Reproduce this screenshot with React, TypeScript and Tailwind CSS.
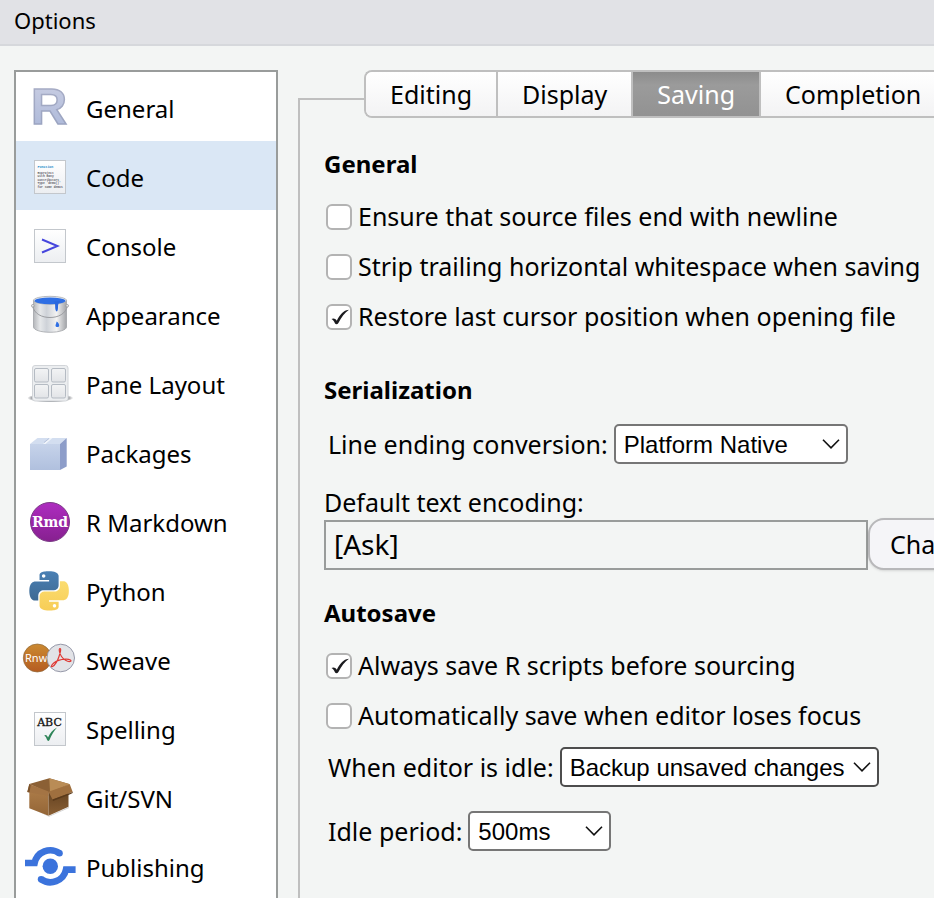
import { useState, type ReactNode } from "react";

const BLUE = "#3b73dc";

function Sheet({ children }: { children: ReactNode }) {
  return (
    <>
      <rect x="12.5" y="19.5" width="31" height="33" fill="url(#sheet)" stroke="#c3c7cc" />
      {children}
    </>
  );
}

function GeneralIcon() {
  return (
    <text x="9" y="52" fontFamily="Liberation Sans" fontWeight="700" fontSize="50" fill="url(#letter)" stroke="url(#letterEdge)" strokeWidth="1.500">
      R
    </text>
  );
}

function CodeIcon() {
  return (
    <Sheet>
      <g fontFamily="Liberation Mono" fontWeight="700" fontSize="3" fill="#5c6068">
        <text x="15.500" y="26.500" fontSize="3.300" fill="#1787c9">Function</text>
        <text x="15.500" y="32.500">Rsproject</text>
        <text x="15.500" y="36">with many</text>
        <text x="15.500" y="39.500">contributors</text>
        <text x="15.500" y="43">Type 'demo()'</text>
        <text x="15.500" y="46.500">for some demos</text>
      </g>
    </Sheet>
  );
}

function ConsoleIcon() {
  return (
    <Sheet>
      <polyline points="20,29.500 35.500,36 20,42.500" fill="none" stroke="#4646dd" strokeWidth="1.900" />
    </Sheet>
  );
}

function AppearanceIcon() {
  return (
    <>
      <path d="M11.500 21V48c0 3 7.500 5.300 16.500 5.300S44.500 51 44.500 48V21z" fill="url(#metal)" stroke="#9a9ca0" strokeWidth=".7" />
      <ellipse cx="28" cy="21.300" rx="16.500" ry="4" fill="#eef0f2" stroke="#a8abb0" strokeWidth=".8" />
      <ellipse cx="28" cy="21.800" rx="15.500" ry="3.400" fill="#2f6fe4" />
      <path d="M31.500 22.500c1.500 1 1.700 2 1.700 6 0 1.200.5 4 1.500 4s1.300-2.500 1.300-4c0-3 .3-5 2.500-6.500z" fill="#2b68de" />
      <path d="M10.500 26.500C12 35 20 38.500 28 38.500S44 35 45.500 26.500" fill="none" stroke="#9c9ea2" strokeWidth="1" />
      <circle cx="10.800" cy="26.800" r="1.300" fill="#f1f1f1" stroke="#909296" strokeWidth=".8" />
      <circle cx="45.200" cy="26.800" r="1.300" fill="#f1f1f1" stroke="#909296" strokeWidth=".8" />
      <path d="M34.500 42.500c1.800 1 2.700 2.500 2.700 4 0 2-3.700 2-3.700 0 0-1.200 1-2 1-4z" fill="#2f6fe4" />
    </>
  );
}

function PaneIcon() {
  return (
    <>
      <ellipse cx="28.300" cy="50" rx="23" ry="4.500" fill="url(#shade)" />
      <rect x="10.500" y="17.500" width="35.500" height="35.500" rx="2.500" fill="#eceef0" stroke="#d2d5d9" />
      {[12.5, 29.5].map((x) =>
        [20.5, 36.5].map((y) => (
          <rect key={`${x} ${y}`} x={x} y={y} width="14" height="13.500" rx="1.500" fill="url(#pane)" stroke="#b5bbc3" />
        )),
      )}
    </>
  );
}

function PackagesIcon() {
  return (
    <>
      <path d="M8 27l7.500-6h29.200L38 27z" fill="#d3def0" />
      <path d="M21 27l7-6h2.500l-7 6z" fill="#f1f5fb" />
      <path d="M22 25.500l5-4" stroke="#a9b6d3" strokeWidth=".7" />
      <path d="M38 27l6.700-6v28.500L38 53z" fill="#8d9dc9" />
      <path d="M8 27h30v26H8z" fill="url(#carton)" />
    </>
  );
}

function MarkdownIcon() {
  return (
    <>
      <circle cx="28" cy="36" r="19.500" fill="url(#purple)" stroke="#7b3b86" strokeWidth="1" />
      <text x="28" y="41" textAnchor="middle" fontFamily="DejaVu Serif" fontWeight="700" fontSize="14" fill="#fff">
        Rmd
      </text>
    </>
  );
}

function PythonIcon() {
  return (
    <g transform="translate(7.400 16.200) scale(1.640)">
      <path
        fill="url(#pyBlue)"
        d="M14.25.18l.9.2.73.26.59.3.45.32.34.34.25.34.16.33.1.3.04.26.02.2-.01.13V8.5l-.05.63-.13.55-.21.46-.26.38-.3.31-.33.25-.35.19-.35.14-.33.1-.3.07-.26.04-.21.02H8.77l-.69.05-.59.14-.5.22-.41.27-.33.32-.27.35-.2.36-.15.37-.1.35-.07.32-.04.27-.02.21v3.06H3.17l-.21-.03-.28-.07-.32-.12-.35-.18-.36-.26-.36-.36-.35-.46-.32-.59-.28-.73-.21-.88-.14-1.05-.05-1.23.06-1.22.16-1.04.24-.87.32-.71.36-.57.4-.44.42-.33.42-.24.4-.16.36-.1.32-.05.24-.01h.16l.06.01h8.16v-.83H6.18l-.01-2.75-.02-.37.05-.34.11-.31.17-.28.25-.26.31-.23.38-.2.44-.18.51-.15.58-.12.64-.1.71-.06.77-.04.84-.02 1.27.05zm-6.3 1.98l-.23.33-.08.41.08.41.23.34.33.22.41.09.41-.09.33-.22.23-.34.08-.41-.08-.41-.23-.33-.33-.22-.41-.09-.41.09z"
      />
      <path
        fill="url(#pyYellow)"
        d="M21.04 6.110l.28.06.32.12.35.18.36.27.36.35.35.47.32.59.28.73.21.88.14 1.04.05 1.23-.06 1.23-.16 1.04-.24.86-.32.71-.36.57-.4.45-.42.33-.42.24-.4.16-.36.09-.32.05-.24.02-.16-.01h-8.22v.82h5.84l.01 2.760.02.36-.05.34-.11.31-.17.29-.25.25-.31.24-.38.2-.44.17-.51.15-.58.13-.64.09-.71.07-.77.04-.84.01-1.27-.04-1.07-.14-.9-.2-.73-.25-.59-.3-.45-.33-.34-.34-.25-.34-.16-.33-.1-.3-.04-.25-.02-.2.01-.13v-5.340l.05-.64.13-.54.21-.46.26-.38.3-.32.33-.24.35-.2.35-.14.33-.1.3-.06.26-.04.21-.02.13-.01h5.840l.69-.05.59-.14.5-.21.41-.28.33-.32.27-.35.2-.36.15-.36.1-.35.07-.32.04-.28.02-.21V6.070h2.090l.14.01zm-6.470 14.250l-.23.33-.08.41.08.41.23.33.33.23.41.08.41-.08.33-.23.23-.33.08-.41-.08-.41-.23-.33-.33-.23-.41-.08-.41.08z"
      />
    </g>
  );
}

function SweaveIcon() {
  return (
    <>
      <circle cx="15.300" cy="34" r="14" fill="url(#orange)" stroke="#8f6a3c" strokeWidth=".7" />
      <text x="3" y="38" fontFamily="Noto Sans" fontSize="11" fill="#fff">Rnw</text>
      <circle cx="38.700" cy="34" r="13.800" fill="#e2e3e7" stroke="#8b8fa0" strokeWidth=".9" />
      <path
        d="M38 24.500c-1.500 0-.5 5 1.500 8s6 5.500 8.500 5 0-2.500-4.500-2.300-9.500 1.800-12 4-2.800 4.300-1 3.300 5-5.500 6.500-10 2.300-8 1-8z"
        fill="none"
        stroke="#df3a35"
        strokeWidth="1.200"
      />
    </>
  );
}

function SpellingIcon() {
  return (
    <Sheet>
      <text x="27.500" y="33" textAnchor="middle" fontFamily="DejaVu Serif" fontSize="11" fill="#111" stroke="#111" strokeWidth=".3">
        ABC
      </text>
      <path d="M22.200 42.800c1.500-1.800 2.800-.8 3.800 1.700 2-4.500 4.500-7.500 9-10-3.500 4-5.500 7.500-7.500 12.500-1 1.500-2 1-2.500-.2-.7-2.200-1.500-3.800-2.800-4z" fill="#2e8458" />
    </Sheet>
  );
}

function GitIcon() {
  return (
    <>
      <path d="M9 46l18 8 20-9v1l-20 8.800z" fill="#00000030" />
      <path d="M7.300 22l20-5.700 20.700 6L27 31z" fill="#8b6035" />
      <path d="M27.300 16.300l20.700 6L28 30z" fill="#b98c56" />
      <path d="M7.300 24L26.500 30.500V53.700L7.300 46.300z" fill="url(#boxLeft)" />
      <path d="M26.500 30.500L46.500 26v18.700L26.500 53.700z" fill="url(#boxRight)" />
      <path d="M7.300 22L26.500 29.500 26.500 34 5.300 30z" fill="#a47444" />
      <path d="M5.300 30l2-8 1.500.8-1.300 7.600z" fill="#7c532c" />
      <path d="M26.500 29.700L47.800 22.300 50.700 30 30.500 37.500z" fill="#a0703f" />
      <path d="M30.500 37.500L50.700 30v1l-4.200 2-15.500 6z" fill="#5a3a1b" />
    </>
  );
}

function PublishingIcon() {
  return (
    <>
      <circle cx="28.300" cy="35.300" r="7.700" fill={BLUE} />
      {["", "rotate(180 28.300 35.300)"].map((turn) => (
        <g key={turn} transform={turn}>
          <path d="M3 32h9.600A16 16 0 0 1 37.500 22.300" fill="none" stroke={BLUE} strokeWidth="6.600" />
          <circle cx="37.500" cy="22.300" r="3.300" fill={BLUE} />
        </g>
      ))}
    </>
  );
}

const gradients: [string, string, string][] = [
  ["sheet", "#ffffff", "#eceef1"],
  ["letter", "#cbcfe3", "#a9b6d8"],
  ["letterEdge", "#a9aec6", "#98a2c0"],
  ["pane", "#f3f4f5", "#e2e4e7"],
  ["carton", "#c6d3ea", "#b0c0de"],
  ["purple", "#ae2cc0", "#86208f"],
  ["orange", "#cb8a31", "#b55c20"],
  ["pyBlue", "#4a80b4", "#3f6a93"],
  ["pyYellow", "#fbdc70", "#f7cd56"],
  ["boxLeft", "#b07f4b", "#936536"],
  ["boxRight", "#5f3f1f", "#8a5f34"],
];

function Gradients() {
  return (
    <svg className="absolute size-0" aria-hidden="true">
      <defs>
        {gradients.map(([id, from, to]) => (
          <linearGradient key={id} id={id} x1="0" y1="0" x2="0" y2="1">
            <stop offset="0" stopColor={from} />
            <stop offset="1" stopColor={to} />
          </linearGradient>
        ))}
        <linearGradient id="metal">
          <stop offset="0" stopColor="#b4b6ba" />
          <stop offset=".2" stopColor="#e6e8ea" />
          <stop offset=".4" stopColor="#ced2d8" />
          <stop offset=".7" stopColor="#f3f3f3" />
          <stop offset="1" stopColor="#a2a4a8" />
        </linearGradient>
        <radialGradient id="shade">
          <stop offset=".75" stopColor="#85888d" />
          <stop offset="1" stopColor="#85888d00" />
        </radialGradient>
      </defs>
    </svg>
  );
}

const sections: [string, () => ReactNode][] = [
  ["General", GeneralIcon],
  ["Code", CodeIcon],
  ["Console", ConsoleIcon],
  ["Appearance", AppearanceIcon],
  ["Pane Layout", PaneIcon],
  ["Packages", PackagesIcon],
  ["R Markdown", MarkdownIcon],
  ["Python", PythonIcon],
  ["Sweave", SweaveIcon],
  ["Spelling", SpellingIcon],
  ["Git/SVN", GitIcon],
  ["Publishing", PublishingIcon],
];

function CheckRow({ id, label, defaultChecked = false }: { id: string; label: string; defaultChecked?: boolean }) {
  const [checked, setChecked] = useState(defaultChecked);
  return (
    <div className="flex h-[50px] items-center gap-1.5 pl-0.5">
      <span className="relative flex">
        <input
          id={id}
          type="checkbox"
          checked={checked}
          onChange={(e) => setChecked(e.target.checked)}
          className="size-[26px] appearance-none rounded-md border-2 border-[#b3b3b3] bg-white"
        />
        {checked && (
          <svg viewBox="0 0 26 26" className="pointer-events-none absolute inset-0 size-[26px]" aria-hidden="true">
            <path d="M5.500 15c2-1.200 4-.3 5.300 1.700C13.500 11.500 16.500 7.500 20.500 6.200l2.500-.4C18.800 8.500 15.300 13.500 12.400 19c-.9 1.600-2.800 1.600-3.500.2-.9-1.900-1.700-3.400-3.400-4.200z" fill="#1b1b1f" />
          </svg>
        )}
      </span>
      <label htmlFor={id} className="pb-0.5">
        {label}
      </label>
    </div>
  );
}

function SelectRow({ id, label, options, box }: { id: string; label: string; options: string[]; box: string }) {
  return (
    <div className="flex h-10 items-center pl-1">
      <label htmlFor={id}>{label}</label>
      <span className="relative ml-1.5 flex">
        <select
          id={id}
          className={`h-10 appearance-none rounded-[5px] border-2 bg-white pt-0.5 pl-2 font-['Liberation_Sans',sans-serif] text-2xl ${box}`}
        >
          {options.map((o) => (
            <option key={o}>{o}</option>
          ))}
        </select>
        <svg viewBox="0 0 18 10" className="pointer-events-none absolute top-[15px] right-2 h-2.5 w-[18px]" aria-hidden="true">
          <path d="M1 .800l8 8 8-8" fill="none" stroke="#111" strokeWidth="1.600" />
        </svg>
      </span>
    </div>
  );
}

const tabs = ["Editing", "Display", "Saving", "Completion"];

export default function App() {
  return (
    <div className="flex h-screen flex-col overflow-hidden bg-[#f3f5f4] font-['Noto_Sans',sans-serif] text-2xl text-black">
      <Gradients />
      <header className="flex h-[46px] shrink-0 items-center border-b-2 border-[#d6d8dc] bg-[#e1e2e6] px-3.5 pb-0.5">
        <h1 className="text-[22px]">Options</h1>
      </header>

      <div className="flex min-h-0 flex-1 pt-6 pl-3.5">
        <nav className="w-[264px] shrink-0 overflow-hidden border-2 border-b-0 border-[#999c9b] bg-white" aria-label="Sections">
          {sections.map(([name, Icon]) => (
            <button
              key={name}
              type="button"
              className={`flex h-[69px] w-full items-center gap-2 pl-1.5 text-left ${name === "Code" ? "bg-[#dae7f5]" : ""}`}
            >
              <svg viewBox="0 0 56 69" className="h-[69px] w-14 shrink-0" aria-hidden="true">
                <Icon />
              </svg>
              <span className="pt-1">{name}</span>
            </button>
          ))}
        </nav>

        <main className="ml-5 flex min-w-0 flex-1 flex-col text-[25px] leading-8">
          <div role="tablist" className="relative z-10 -mb-5 ml-[66px] flex h-12 w-max shrink-0 rounded-l-lg border-2 border-r-0 border-[#bfbfbf]">
            {tabs.map((tab, i) => (
              <button
                key={tab}
                type="button"
                role="tab"
                aria-selected={tab === "Saving"}
                className={`border-[#bfbfbf] px-6 ${i > 0 ? "border-l-2" : "rounded-l-md"} ${
                  tab === "Saving"
                    ? "bg-linear-to-b from-[#8c8c8c] via-[#9b9b9b] via-30% to-[#929292] text-white"
                    : "bg-linear-to-b from-white to-[#f3f3f4]"
                }`}
              >
                {tab}
              </button>
            ))}
          </div>

          <div role="tabpanel" className="flex-1 border-t-2 border-l-2 border-[#bfbfbf] pt-12 pl-6 whitespace-nowrap">
            <h2 className="mb-3 text-2xl font-bold">General</h2>
            <CheckRow id="newline" label="Ensure that source files end with newline" />
            <CheckRow id="strip" label="Strip trailing horizontal whitespace when saving" />
            <CheckRow id="restore" label="Restore last cursor position when opening file" defaultChecked />

            <h2 className="mt-8 mb-[18px] text-2xl font-bold">Serialization</h2>
            <SelectRow
              id="ending"
              label="Line ending conversion:"
              options={["Platform Native", "Posix (LF)", "Windows (CR/LF)"]}
              box="w-[234px] border-[#767676]"
            />
            <label htmlFor="encoding" className="mt-[22px] block">
              Default text encoding:
            </label>
            <div className="flex items-end">
              <input
                id="encoding"
                readOnly
                value="[Ask]"
                className="h-[50px] w-[544px] shrink-0 border-2 border-[#999c9b] bg-transparent px-2 pb-0.5 text-[28px]"
              />
              <button
                type="button"
                className="h-[52px] shrink-0 rounded-2xl border-2 border-[#b8b8ba] bg-[#f5f5f8] px-5 shadow-sm"
              >
                Change...
              </button>
            </div>

            <h2 className="mt-[27px] mb-3 text-2xl font-bold">Autosave</h2>
            <CheckRow id="source" label="Always save R scripts before sourcing" defaultChecked />
            <CheckRow id="blur" label="Automatically save when editor loses focus" />
            <div className="mt-1.5 flex flex-col gap-6">
              <SelectRow
                id="idle"
                label="When editor is idle:"
                options={["Backup unsaved changes", "Save and write changes", "Do nothing"]}
                box="w-[319px] border-[#4d4d4d]"
              />
              <SelectRow id="period" label="Idle period:" options={["500ms", "1000ms", "2000ms"]} box="w-[143px] border-[#767676]" />
            </div>
          </div>
        </main>
      </div>
    </div>
  );
}
